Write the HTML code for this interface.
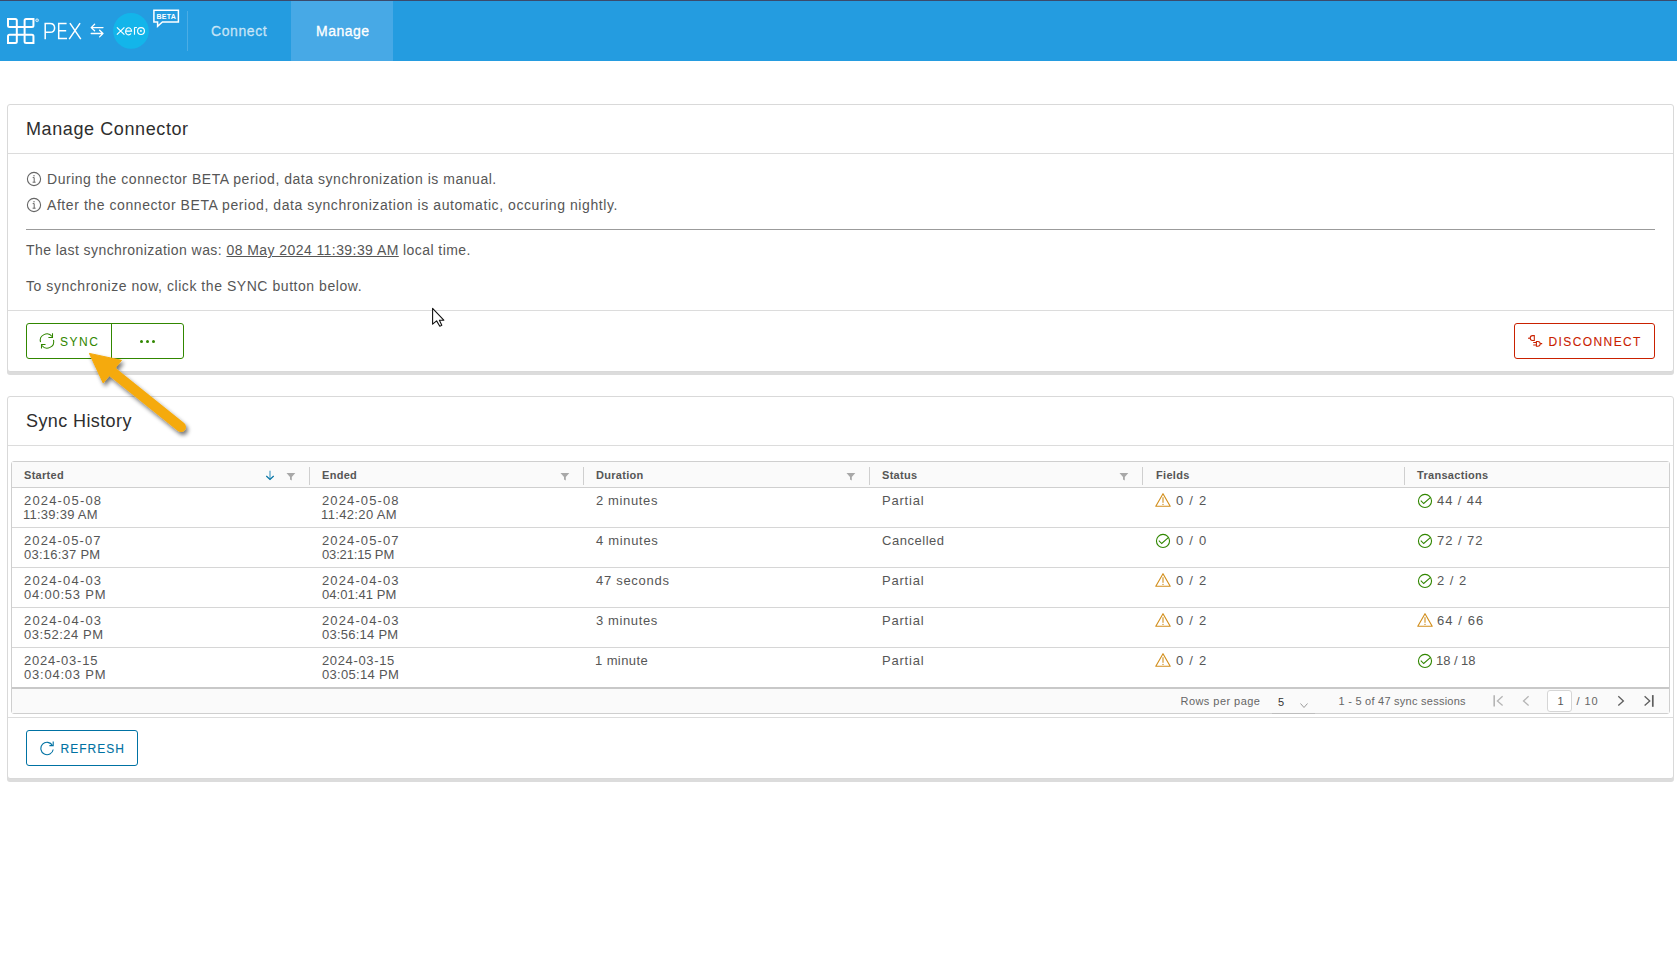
<!DOCTYPE html>
<html><head><meta charset="utf-8"><title>PEX Xero Connector - Manage</title>
<style>
html,body{margin:0;padding:0;background:#fff;}
body{width:1677px;height:962px;position:relative;overflow:hidden;font-family:"Liberation Sans", sans-serif;}
.t{position:absolute;white-space:pre;}
.b{position:absolute;}
</style></head><body>
<div class="b" style="left:0px;top:0px;width:1677px;height:61px;background:#249ce0;"></div>
<div class="b" style="left:0px;top:0px;width:1677px;height:1px;background:#3b4a6b;"></div>
<div class="b" style="left:291px;top:1px;width:102px;height:60px;background:#47a9e6;"></div>
<div class="b" style="left:187px;top:11px;width:1px;height:40px;background:rgba(255,255,255,0.18);"></div>
<div class="t" style="left:211px;top:23.95px;font-size:14px;line-height:14px;color:rgba(255,255,255,0.68);font-weight:400;letter-spacing:0.6px;-webkit-text-stroke:0.3px rgba(255,255,255,0.68);">Connect</div>
<div class="t" style="left:316px;top:23.95px;font-size:14px;line-height:14px;color:#ffffff;font-weight:400;letter-spacing:0.5px;-webkit-text-stroke:0.3px #fff;">Manage</div>
<svg class="b" style="left:0;top:0" width="200" height="61" viewBox="0 0 200 61">
<path d="M16.8 27.05 H9.5 Q8 27.05 8 25.55 V19 H15.3 Q16.8 19 16.8 20.5 V41.4 Q16.8 42.9 15.3 42.9 H8 V36.3 Q8 34.8 9.5 34.8 H31.95 Q33.45 34.8 33.45 36.3 V42.9 H26.1 Q24.6 42.9 24.6 41.4 V20.5 Q24.6 19 26.1 19 H33.45 V25.55 Q33.45 27.05 31.95 27.05 H16.8 Z" fill="none" stroke="#fff" stroke-width="2" stroke-linejoin="miter"/>
<circle cx="37.1" cy="20.3" r="1.45" fill="rgba(255,255,255,0.35)" stroke="#fff" stroke-width="0.6"/>
<g fill="none" stroke="#fff" stroke-width="1.5" stroke-linecap="butt">
 <path d="M45.2 39.3 V23.4 H50 Q54.6 23.4 54.6 27.9 Q54.6 32.3 50 32.3 H45.2"/>
 <path d="M66.6 23.4 H58.7 V38.6 H67 M58.7 30.8 H66.2"/>
 <path d="M69.9 23.2 L80.8 39.2 M80.1 23.2 L69.2 39.2"/>
</g>
<g fill="none" stroke="#fff" stroke-width="1.3" stroke-linecap="round" stroke-linejoin="round">
 <path d="M103 27.6 H91.2 M94.6 24.2 L91.2 27.6 L94.6 30.8"/>
 <path d="M91.2 33.5 H103 M99.6 30.3 L103 33.5 L99.6 36.9"/>
</g>
<circle cx="131" cy="30.9" r="17.9" fill="#13b5ea"/>
<g fill="none" stroke="#fff" stroke-width="1.15">
 <path d="M116.9 27.4 L124.4 34.6 M124.4 27.4 L116.9 34.6"/>
 <path d="M125.7 31.15 H131.6 A3.0 3.6 0 1 0 131.0 33.5"/>
 <path d="M134.5 34.7 V27.7 Q134.5 27.5 135.2 27.5 H136.9"/>
 <circle cx="141" cy="31.05" r="3.4"/>
</g>
<circle cx="140.9" cy="30.9" r="0.95" fill="#fff"/>
<path d="M153.9 10.3 H178.4 V22 H162.4 L157.6 26.3 V22 H153.9 Z" fill="none" stroke="#fff" stroke-width="1.5" stroke-linejoin="miter"/>
<text x="156.6" y="18.9" font-family="Liberation Sans" font-weight="700" font-size="7" fill="#fff" letter-spacing="0.2">BETA</text>
</svg>
<div class="b" style="left:7px;top:104px;width:1667px;height:268px;border:1px solid #d9d9d9;border-radius:3px;box-sizing:border-box;background:#fff;box-shadow:0 3px 0 0 #dcdcdc;"></div>
<div class="b" style="left:8px;top:153px;width:1665px;height:1px;background:#dcdcdc;"></div>
<div class="t" style="left:26px;top:119.76px;font-size:18px;line-height:18px;color:#2e2e2e;font-weight:400;letter-spacing:0.6px;">Manage Connector</div>
<svg class="b" style="left:26px;top:171.2px" width="16" height="16" viewBox="0 0 16 16"><circle cx="8" cy="8" r="6.6" fill="none" stroke="#666" stroke-width="1.1"/><path d="M6.7 6.6 H8.2 V11.2 M6.6 11.2 H9.6" fill="none" stroke="#666" stroke-width="1"/><circle cx="8" cy="4.7" r="0.7" fill="#666"/></svg>
<svg class="b" style="left:26px;top:197.2px" width="16" height="16" viewBox="0 0 16 16"><circle cx="8" cy="8" r="6.6" fill="none" stroke="#666" stroke-width="1.1"/><path d="M6.7 6.6 H8.2 V11.2 M6.6 11.2 H9.6" fill="none" stroke="#666" stroke-width="1"/><circle cx="8" cy="4.7" r="0.7" fill="#666"/></svg>
<div class="t" style="left:47px;top:172.15px;font-size:14px;line-height:14px;color:#565656;font-weight:400;letter-spacing:0.53px;">During the connector BETA period, data synchronization is manual.</div>
<div class="t" style="left:47px;top:198.15px;font-size:14px;line-height:14px;color:#565656;font-weight:400;letter-spacing:0.57px;">After the connector BETA period, data synchronization is automatic, occuring nightly.</div>
<div class="b" style="left:26px;top:229px;width:1629px;height:1px;background:#9b9b9b;"></div>
<div class="t" style="left:26px;top:243.15px;font-size:14px;line-height:14px;color:#565656;font-weight:400;letter-spacing:0.43px;">The last synchronization was: <span style="text-decoration:underline;text-underline-offset:1px">08 May 2024 11:39:39 AM</span> local time.</div>
<div class="t" style="left:26px;top:279.15px;font-size:14px;line-height:14px;color:#565656;font-weight:400;letter-spacing:0.55px;">To synchronize now, click the SYNC button below.</div>
<div class="b" style="left:8px;top:310px;width:1665px;height:1px;background:#dcdcdc;"></div>
<div class="b" style="left:26px;top:323px;width:158px;height:36px;border:1px solid #318700;border-radius:3px;box-sizing:border-box;"></div>
<div class="b" style="left:111px;top:323px;width:1px;height:36px;background:#318700;"></div>
<svg class="b" style="left:36px;top:330px" width="24" height="22" viewBox="36 330 24 22"><g fill="none" stroke="#318700" stroke-width="1.05"><path d="M40.5 342.2 A6.6 6.6 0 0 1 52.1 336.5"/><path d="M52.5 333.2 V337.4 H48.4"/><path d="M53.5 339.8 A6.6 6.6 0 0 1 41.9 345.5"/><path d="M41.5 348.6 V344.4 H45.5"/></g></svg>
<div class="t" style="left:60px;top:335.84px;font-size:12px;line-height:12px;color:#318700;font-weight:400;letter-spacing:1.5px;-webkit-text-stroke:0.05px #318700;">SYNC</div>
<div class="b" style="left:139.5px;top:339.5px;width:3px;height:3px;background:#318700;border-radius:50%;"></div>
<div class="b" style="left:145.7px;top:339.5px;width:3px;height:3px;background:#318700;border-radius:50%;"></div>
<div class="b" style="left:151.9px;top:339.5px;width:3px;height:3px;background:#318700;border-radius:50%;"></div>
<div class="b" style="left:1514px;top:323px;width:141px;height:36px;border:1px solid #c92100;border-radius:3px;box-sizing:border-box;"></div>
<svg class="b" style="left:1524px;top:330px" width="24" height="22" viewBox="1524 330 24 22"><g fill="none" stroke="#c92100" stroke-width="1.05"><path d="M1528 338.2 H1530.2"/><path d="M1534.3 335.6 H1532.6 A2.4 2.4 0 0 0 1532.6 340.4 H1534.3 Z"/><path d="M1536.4 341.4 H1537.8 A2.4 2.4 0 0 1 1537.8 346.2 H1536.4 Z"/><path d="M1540.2 343.6 H1542.2 M1533.2 342.5 H1536.4 M1533.2 345 H1536.4"/></g></svg>
<div class="t" style="left:1548.5px;top:335.84px;font-size:12px;line-height:12px;color:#c92100;font-weight:400;letter-spacing:1.4px;-webkit-text-stroke:0.1px #c92100;">DISCONNECT</div>
<div class="b" style="left:7px;top:396px;width:1667px;height:383px;border:1px solid #d9d9d9;border-radius:3px;box-sizing:border-box;background:#fff;box-shadow:0 3px 0 0 #dcdcdc;"></div>
<div class="b" style="left:8px;top:445px;width:1665px;height:1px;background:#dcdcdc;"></div>
<div class="t" style="left:26px;top:411.76px;font-size:18px;line-height:18px;color:#2e2e2e;font-weight:400;letter-spacing:0.4px;">Sync History</div>
<div class="b" style="left:11px;top:461px;width:1659px;height:253px;border:1px solid #cfcfcf;border-radius:3px;box-sizing:border-box;background:#fff;"></div>
<div class="b" style="left:12px;top:462px;width:1657px;height:25px;background:#fafafa;"></div>
<div class="b" style="left:12px;top:487px;width:1657px;height:1px;background:#cfcfcf;"></div>
<div class="b" style="left:309px;top:467px;width:1px;height:18px;background:#cfcfcf;"></div>
<div class="b" style="left:583px;top:467px;width:1px;height:18px;background:#cfcfcf;"></div>
<div class="b" style="left:869px;top:467px;width:1px;height:18px;background:#cfcfcf;"></div>
<div class="b" style="left:1142px;top:467px;width:1px;height:18px;background:#cfcfcf;"></div>
<div class="b" style="left:1404px;top:467px;width:1px;height:18px;background:#cfcfcf;"></div>
<div class="t" style="left:24px;top:469.69px;font-size:11px;line-height:11px;color:#565656;font-weight:700;letter-spacing:0.3px;">Started</div>
<div class="t" style="left:322px;top:469.69px;font-size:11px;line-height:11px;color:#565656;font-weight:700;letter-spacing:0.3px;">Ended</div>
<div class="t" style="left:596px;top:469.69px;font-size:11px;line-height:11px;color:#565656;font-weight:700;letter-spacing:0.3px;">Duration</div>
<div class="t" style="left:882px;top:469.69px;font-size:11px;line-height:11px;color:#565656;font-weight:700;letter-spacing:0.3px;">Status</div>
<div class="t" style="left:1156px;top:469.69px;font-size:11px;line-height:11px;color:#565656;font-weight:700;letter-spacing:0.3px;">Fields</div>
<div class="t" style="left:1417px;top:469.69px;font-size:11px;line-height:11px;color:#565656;font-weight:700;letter-spacing:0.3px;">Transactions</div>
<svg class="b" style="left:264px;top:469px" width="12" height="12" viewBox="0 0 12 12"><g fill="none" stroke="#0072a3" stroke-width="1.15"><path d="M6 1.8 V10.3" stroke="#4c9cc4"/><path d="M2.3 7 L6 10.5 L9.7 7"/></g></svg>
<svg class="b" style="left:285.9px;top:472px" width="10" height="10" viewBox="0 0 10 10"><path d="M0.5 1 H9.3 L5.8 5 V8.4 L4 7.6 V5 Z" fill="#a8a8a8"/></svg>
<svg class="b" style="left:559.5px;top:472px" width="10" height="10" viewBox="0 0 10 10"><path d="M0.5 1 H9.3 L5.8 5 V8.4 L4 7.6 V5 Z" fill="#a8a8a8"/></svg>
<svg class="b" style="left:845.8px;top:472px" width="10" height="10" viewBox="0 0 10 10"><path d="M0.5 1 H9.3 L5.8 5 V8.4 L4 7.6 V5 Z" fill="#a8a8a8"/></svg>
<svg class="b" style="left:1119px;top:472px" width="10" height="10" viewBox="0 0 10 10"><path d="M0.5 1 H9.3 L5.8 5 V8.4 L4 7.6 V5 Z" fill="#a8a8a8"/></svg>
<div class="t" style="left:24px;top:494.00px;font-size:13px;line-height:13px;color:#565656;font-weight:400;letter-spacing:1.17px;">2024-05-08</div>
<div class="t" style="left:23px;top:508.00px;font-size:13px;line-height:13px;color:#565656;font-weight:400;letter-spacing:0.25px;">11:39:39 AM</div>
<div class="t" style="left:322px;top:494.00px;font-size:13px;line-height:13px;color:#565656;font-weight:400;letter-spacing:1.12px;">2024-05-08</div>
<div class="t" style="left:321px;top:508.00px;font-size:13px;line-height:13px;color:#565656;font-weight:400;letter-spacing:0.36px;">11:42:20 AM</div>
<div class="t" style="left:596px;top:494.00px;font-size:13px;line-height:13px;color:#565656;font-weight:400;letter-spacing:0.64px;">2 minutes</div>
<div class="t" style="left:882px;top:494.00px;font-size:13px;line-height:13px;color:#565656;font-weight:400;letter-spacing:0.78px;">Partial</div>
<svg class="b" style="left:1153px;top:487px" width="20" height="28" viewBox="1153 487 20 28"><path d="M1163 493.7 L1170.2 506.2 H1155.8 Z" fill="none" stroke="#d28f1e" stroke-width="1.15" stroke-linejoin="round"/><path d="M1163 497.3 V502.8" stroke="#d28f1e" stroke-width="1.1"/><circle cx="1163" cy="504.4" r="0.65" fill="#d28f1e"/></svg>
<div class="t" style="left:1176px;top:494.00px;font-size:13px;line-height:13px;color:#565656;font-weight:400;letter-spacing:1.25px;">0 / 2</div>
<svg class="b" style="left:1415px;top:487px" width="20" height="28" viewBox="1415 487 20 28"><circle cx="1425" cy="500.9" r="6.55" fill="none" stroke="#318700" stroke-width="1.1"/><path d="M1420.8 500.59999999999997 L1423.7 503.5 L1430.3 497.59999999999997" fill="none" stroke="#318700" stroke-width="1.05"/></svg>
<div class="t" style="left:1437px;top:494.00px;font-size:13px;line-height:13px;color:#565656;font-weight:400;letter-spacing:0.9px;">44 / 44</div>
<div class="b" style="left:12px;top:527px;width:1657px;height:1px;background:#d6d6d6;"></div>
<div class="t" style="left:24px;top:534.00px;font-size:13px;line-height:13px;color:#565656;font-weight:400;letter-spacing:1.12px;">2024-05-07</div>
<div class="t" style="left:24px;top:548.00px;font-size:13px;line-height:13px;color:#565656;font-weight:400;letter-spacing:0.24px;">03:16:37 PM</div>
<div class="t" style="left:322px;top:534.00px;font-size:13px;line-height:13px;color:#565656;font-weight:400;letter-spacing:1.12px;">2024-05-07</div>
<div class="t" style="left:322px;top:548.00px;font-size:13px;line-height:13px;color:#565656;font-weight:400;letter-spacing:-0.15px;">03:21:15 PM</div>
<div class="t" style="left:596px;top:534.00px;font-size:13px;line-height:13px;color:#565656;font-weight:400;letter-spacing:0.68px;">4 minutes</div>
<div class="t" style="left:882px;top:534.00px;font-size:13px;line-height:13px;color:#565656;font-weight:400;letter-spacing:0.53px;">Cancelled</div>
<svg class="b" style="left:1153px;top:527px" width="20" height="28" viewBox="1153 527 20 28"><circle cx="1163" cy="540.9" r="6.55" fill="none" stroke="#318700" stroke-width="1.1"/><path d="M1158.8 540.6 L1161.7 543.5 L1168.3 537.6" fill="none" stroke="#318700" stroke-width="1.05"/></svg>
<div class="t" style="left:1176px;top:534.00px;font-size:13px;line-height:13px;color:#565656;font-weight:400;letter-spacing:1.25px;">0 / 0</div>
<svg class="b" style="left:1415px;top:527px" width="20" height="28" viewBox="1415 527 20 28"><circle cx="1425" cy="540.9" r="6.55" fill="none" stroke="#318700" stroke-width="1.1"/><path d="M1420.8 540.6 L1423.7 543.5 L1430.3 537.6" fill="none" stroke="#318700" stroke-width="1.05"/></svg>
<div class="t" style="left:1437px;top:534.00px;font-size:13px;line-height:13px;color:#565656;font-weight:400;letter-spacing:0.95px;">72 / 72</div>
<div class="b" style="left:12px;top:567px;width:1657px;height:1px;background:#d6d6d6;"></div>
<div class="t" style="left:24px;top:574.00px;font-size:13px;line-height:13px;color:#565656;font-weight:400;letter-spacing:1.17px;">2024-04-03</div>
<div class="t" style="left:24px;top:588.00px;font-size:13px;line-height:13px;color:#565656;font-weight:400;letter-spacing:0.78px;">04:00:53 PM</div>
<div class="t" style="left:322px;top:574.00px;font-size:13px;line-height:13px;color:#565656;font-weight:400;letter-spacing:1.12px;">2024-04-03</div>
<div class="t" style="left:322px;top:588.00px;font-size:13px;line-height:13px;color:#565656;font-weight:400;letter-spacing:0.06px;">04:01:41 PM</div>
<div class="t" style="left:596px;top:574.00px;font-size:13px;line-height:13px;color:#565656;font-weight:400;letter-spacing:0.71px;">47 seconds</div>
<div class="t" style="left:882px;top:574.00px;font-size:13px;line-height:13px;color:#565656;font-weight:400;letter-spacing:0.78px;">Partial</div>
<svg class="b" style="left:1153px;top:567px" width="20" height="28" viewBox="1153 567 20 28"><path d="M1163 573.7 L1170.2 586.2 H1155.8 Z" fill="none" stroke="#d28f1e" stroke-width="1.15" stroke-linejoin="round"/><path d="M1163 577.3 V582.8" stroke="#d28f1e" stroke-width="1.1"/><circle cx="1163" cy="584.4" r="0.65" fill="#d28f1e"/></svg>
<div class="t" style="left:1176px;top:574.00px;font-size:13px;line-height:13px;color:#565656;font-weight:400;letter-spacing:1.25px;">0 / 2</div>
<svg class="b" style="left:1415px;top:567px" width="20" height="28" viewBox="1415 567 20 28"><circle cx="1425" cy="580.9" r="6.55" fill="none" stroke="#318700" stroke-width="1.1"/><path d="M1420.8 580.6 L1423.7 583.5 L1430.3 577.6" fill="none" stroke="#318700" stroke-width="1.05"/></svg>
<div class="t" style="left:1437px;top:574.00px;font-size:13px;line-height:13px;color:#565656;font-weight:400;letter-spacing:1.0px;">2 / 2</div>
<div class="b" style="left:12px;top:607px;width:1657px;height:1px;background:#d6d6d6;"></div>
<div class="t" style="left:24px;top:614.00px;font-size:13px;line-height:13px;color:#565656;font-weight:400;letter-spacing:1.17px;">2024-04-03</div>
<div class="t" style="left:24px;top:628.00px;font-size:13px;line-height:13px;color:#565656;font-weight:400;letter-spacing:0.53px;">03:52:24 PM</div>
<div class="t" style="left:322px;top:614.00px;font-size:13px;line-height:13px;color:#565656;font-weight:400;letter-spacing:1.12px;">2024-04-03</div>
<div class="t" style="left:322px;top:628.00px;font-size:13px;line-height:13px;color:#565656;font-weight:400;letter-spacing:0.24px;">03:56:14 PM</div>
<div class="t" style="left:596px;top:614.00px;font-size:13px;line-height:13px;color:#565656;font-weight:400;letter-spacing:0.61px;">3 minutes</div>
<div class="t" style="left:882px;top:614.00px;font-size:13px;line-height:13px;color:#565656;font-weight:400;letter-spacing:0.78px;">Partial</div>
<svg class="b" style="left:1153px;top:607px" width="20" height="28" viewBox="1153 607 20 28"><path d="M1163 613.7 L1170.2 626.2 H1155.8 Z" fill="none" stroke="#d28f1e" stroke-width="1.15" stroke-linejoin="round"/><path d="M1163 617.3 V622.8" stroke="#d28f1e" stroke-width="1.1"/><circle cx="1163" cy="624.4" r="0.65" fill="#d28f1e"/></svg>
<div class="t" style="left:1176px;top:614.00px;font-size:13px;line-height:13px;color:#565656;font-weight:400;letter-spacing:1.25px;">0 / 2</div>
<svg class="b" style="left:1415px;top:607px" width="20" height="28" viewBox="1415 607 20 28"><path d="M1425 613.7 L1432.2 626.2 H1417.8 Z" fill="none" stroke="#d28f1e" stroke-width="1.15" stroke-linejoin="round"/><path d="M1425 617.3 V622.8" stroke="#d28f1e" stroke-width="1.1"/><circle cx="1425" cy="624.4" r="0.65" fill="#d28f1e"/></svg>
<div class="t" style="left:1437px;top:614.00px;font-size:13px;line-height:13px;color:#565656;font-weight:400;letter-spacing:1.08px;">64 / 66</div>
<div class="b" style="left:12px;top:647px;width:1657px;height:1px;background:#d6d6d6;"></div>
<div class="t" style="left:24px;top:654.00px;font-size:13px;line-height:13px;color:#565656;font-weight:400;letter-spacing:0.77px;">2024-03-15</div>
<div class="t" style="left:24px;top:668.00px;font-size:13px;line-height:13px;color:#565656;font-weight:400;letter-spacing:0.78px;">03:04:03 PM</div>
<div class="t" style="left:322px;top:654.00px;font-size:13px;line-height:13px;color:#565656;font-weight:400;letter-spacing:0.64px;">2024-03-15</div>
<div class="t" style="left:322px;top:668.00px;font-size:13px;line-height:13px;color:#565656;font-weight:400;letter-spacing:0.31px;">03:05:14 PM</div>
<div class="t" style="left:595px;top:654.00px;font-size:13px;line-height:13px;color:#565656;font-weight:400;letter-spacing:0.4px;">1 minute</div>
<div class="t" style="left:882px;top:654.00px;font-size:13px;line-height:13px;color:#565656;font-weight:400;letter-spacing:0.78px;">Partial</div>
<svg class="b" style="left:1153px;top:647px" width="20" height="28" viewBox="1153 647 20 28"><path d="M1163 653.7 L1170.2 666.2 H1155.8 Z" fill="none" stroke="#d28f1e" stroke-width="1.15" stroke-linejoin="round"/><path d="M1163 657.3 V662.8" stroke="#d28f1e" stroke-width="1.1"/><circle cx="1163" cy="664.4" r="0.65" fill="#d28f1e"/></svg>
<div class="t" style="left:1176px;top:654.00px;font-size:13px;line-height:13px;color:#565656;font-weight:400;letter-spacing:1.25px;">0 / 2</div>
<svg class="b" style="left:1415px;top:647px" width="20" height="28" viewBox="1415 647 20 28"><circle cx="1425" cy="660.9" r="6.55" fill="none" stroke="#318700" stroke-width="1.1"/><path d="M1420.8 660.6 L1423.7 663.5 L1430.3 657.6" fill="none" stroke="#318700" stroke-width="1.05"/></svg>
<div class="t" style="left:1436px;top:654.00px;font-size:13px;line-height:13px;color:#565656;font-weight:400;letter-spacing:-0.05px;">18 / 18</div>
<div class="b" style="left:12px;top:687px;width:1657px;height:2px;background:#c8c8c8;"></div>
<div class="b" style="left:12px;top:689px;width:1657px;height:24px;background:#fafafa;"></div>
<div class="t" style="left:1180.5px;top:695.89px;font-size:11px;line-height:11px;color:#666;font-weight:400;letter-spacing:0.45px;">Rows per page</div>
<div class="t" style="left:1278px;top:696.69px;font-size:11px;line-height:11px;color:#333;font-weight:400;letter-spacing:0px;">5</div>
<svg class="b" style="left:1299px;top:702px" width="10" height="8" viewBox="0 0 10 8"><path d="M1.5 1.5 L5 5.5 L8.5 1.5" fill="none" stroke="#9a9a9a" stroke-width="1"/></svg>
<div class="b" style="left:1272px;top:713px;width:43px;height:1px;background:#bdbdbd;"></div>
<div class="t" style="left:1338.5px;top:695.89px;font-size:11px;line-height:11px;color:#666;font-weight:400;letter-spacing:0.25px;">1 - 5 of 47 sync sessions</div>
<svg class="b" style="left:1490px;top:693px" width="170" height="16" viewBox="0 0 170 16"><g fill="none" stroke-width="1.3"><path d="M4.2 2.2 V13.6" stroke="#b5b5b5" stroke-width="1.6"/><path d="M12.6 3.2 L7.4 8 L12.6 12.5" stroke="#b5b5b5"/><path d="M38.6 3.2 L33.5 8 L38.6 12.5" stroke="#b5b5b5"/><path d="M128.3 3.2 L133.4 7.9 L128.3 12.6" stroke="#5e5e5e"/><path d="M154.6 3.2 L159.8 7.9 L154.6 12.6" stroke="#5e5e5e"/><path d="M162.8 2.1 V13.8" stroke="#5e5e5e" stroke-width="1.7"/></g></svg>
<div class="b" style="left:1547px;top:690px;width:25px;height:22px;border:1px solid #d6d6d6;border-radius:3px;box-sizing:border-box;background:#fff;"></div>
<div class="t" style="left:1557.5px;top:696.19px;font-size:11px;line-height:11px;color:#565656;font-weight:400;letter-spacing:0px;">1</div>
<div class="t" style="left:1576.5px;top:696.19px;font-size:11px;line-height:11px;color:#666;font-weight:400;letter-spacing:0.9px;">/ 10</div>
<div class="b" style="left:8px;top:717px;width:1665px;height:1px;background:#dcdcdc;"></div>
<div class="b" style="left:26px;top:730px;width:112px;height:36px;border:1px solid #0072a3;border-radius:3px;box-sizing:border-box;"></div>
<svg class="b" style="left:39px;top:740px" width="16" height="16" viewBox="0 0 16 16"><g fill="none" stroke="#0072a3" stroke-width="1.1"><path d="M13.5 5.5 A6.2 6.2 0 1 0 14.2 9.5"/><path d="M14.2 1.5 V5.6 H10.4"/></g></svg>
<div class="t" style="left:60.5px;top:742.84px;font-size:12px;line-height:12px;color:#0072a3;font-weight:400;letter-spacing:1.0px;-webkit-text-stroke:0.1px #0072a3;">REFRESH</div>
<svg class="b" style="left:0;top:0" width="260" height="460" viewBox="0 0 260 460">
<defs><filter id="sh" x="-30%" y="-30%" width="160%" height="160%"><feGaussianBlur in="SourceAlpha" stdDeviation="2.2"/><feOffset dx="2" dy="3"/><feComponentTransfer><feFuncA type="linear" slope="0.55"/></feComponentTransfer><feMerge><feMergeNode/><feMergeNode in="SourceGraphic"/></feMerge></filter></defs>
<g filter="url(#sh)">
<path d="M112.5 372 L181 427" stroke="#f5aa10" stroke-width="10" stroke-linecap="round"/>
<path d="M89.4 353.4 L121.5 360.3 L103.2 383 Z" fill="#f5aa10" stroke="#f5aa10" stroke-width="1" stroke-linejoin="round"/>
</g>
</svg>
<svg class="b" style="left:428px;top:304px" width="24" height="28" viewBox="428 304 24 28"><path d="M432.6 308.4 V324.2 L436.6 320.9 L439.8 326.2 L441.8 325.3 L439.4 320.2 H443.8 Z" fill="#fff" stroke="#111" stroke-width="1.1" stroke-linejoin="round"/></svg>
</body></html>
